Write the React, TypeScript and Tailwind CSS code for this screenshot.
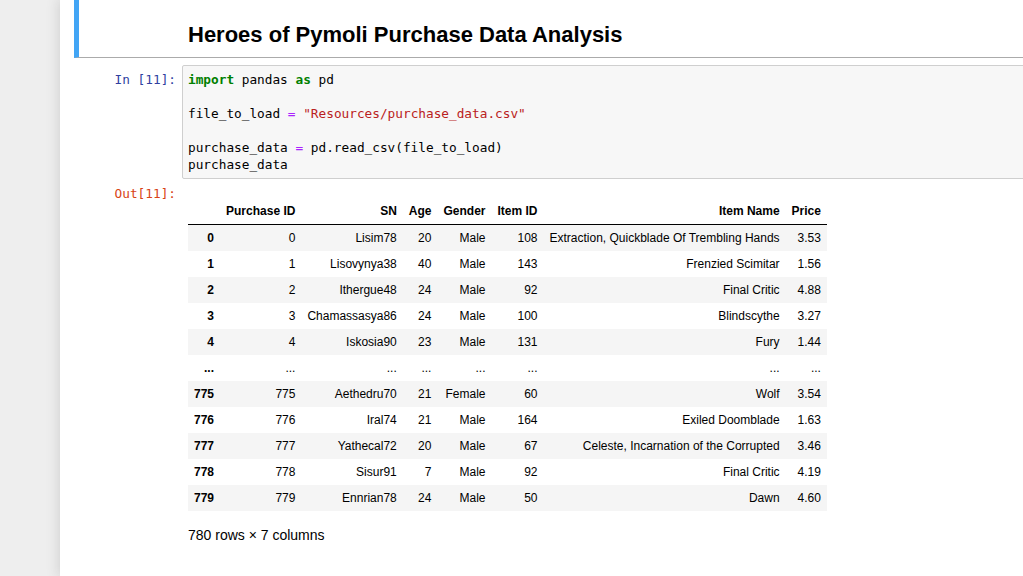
import React from 'react';

const mono = { fontFamily: '"DejaVu Sans Mono", monospace' };

const rows: (string | number)[][] = [
  ['0', '0', 'Lisim78', '20', 'Male', '108', 'Extraction, Quickblade Of Trembling Hands', '3.53'],
  ['1', '1', 'Lisovynya38', '40', 'Male', '143', 'Frenzied Scimitar', '1.56'],
  ['2', '2', 'Ithergue48', '24', 'Male', '92', 'Final Critic', '4.88'],
  ['3', '3', 'Chamassasya86', '24', 'Male', '100', 'Blindscythe', '3.27'],
  ['4', '4', 'Iskosia90', '23', 'Male', '131', 'Fury', '1.44'],
  ['...', '...', '...', '...', '...', '...', '...', '...'],
  ['775', '775', 'Aethedru70', '21', 'Female', '60', 'Wolf', '3.54'],
  ['776', '776', 'Iral74', '21', 'Male', '164', 'Exiled Doomblade', '1.63'],
  ['777', '777', 'Yathecal72', '20', 'Male', '67', 'Celeste, Incarnation of the Corrupted', '3.46'],
  ['778', '778', 'Sisur91', '7', 'Male', '92', 'Final Critic', '4.19'],
  ['779', '779', 'Ennrian78', '24', 'Male', '50', 'Dawn', '4.60'],
];

const headers = ['', 'Purchase ID', 'SN', 'Age', 'Gender', 'Item ID', 'Item Name', 'Price'];

const App = () => {
  return (
    <div className="w-full h-[576px] bg-[#eeeeee] overflow-hidden flex">
      <div className="w-[60px] shrink-0" />
      <div
        className="w-[1140px] shrink-0 h-full bg-white pl-[14px] shadow-[0_0_12px_1px_rgba(87,87,87,0.2)]"
        style={{ fontFamily: '"Liberation Sans", Arial, sans-serif' }}
      >
        {/* markdown cell (selected) */}
        <div className="h-[58px] border-l-[5px] border-b border-l-[#42A5F5] border-b-[#ababab] pl-[109px] pt-[22px]">
          <h2 className="text-[22px] leading-[26px] font-bold text-black">Heroes of Pymoli Purchase Data Analysis</h2>
        </div>

        {/* code cell */}
        <div className="flex mt-[7px]">
          <div className="w-[108px] shrink-0 text-right pr-[6px] pt-[6px] text-[12.75px] leading-[17px] text-[#303F9F]" style={mono}>
            In&nbsp;[11]:
          </div>
          <div
            className="flex-1 border border-[#cfcfcf] bg-[#f7f7f7] rounded-[2px] px-[5px] pt-[5px] pb-[5px] text-[12.75px] leading-[17px] text-black whitespace-pre"
            style={mono}
          >
            <div>
              <span className="text-[#008000] font-bold">import</span> pandas <span className="text-[#008000] font-bold">as</span> pd
            </div>
            <div>&nbsp;</div>
            <div>
              file_to_load <span className="text-[#AA22FF]">=</span> <span className="text-[#BA2121]">"Resources/purchase_data.csv"</span>
            </div>
            <div>&nbsp;</div>
            <div>
              purchase_data <span className="text-[#AA22FF]">=</span> pd.read_csv(file_to_load)
            </div>
            <div>purchase_data</div>
          </div>
        </div>

        {/* output */}
        <div className="flex mt-[6px]">
          <div className="w-[108px] shrink-0 text-right pr-[6px] text-[12.75px] leading-[17px] text-[#D84315]" style={mono}>
            Out[11]:
          </div>
          <div className="flex-1 pl-[6px] pt-[13px]">
            <table className="border-collapse text-[12px] leading-[14px] text-black">
              <thead className="border-b border-black">
                <tr>
                  {headers.map((h, i) => (
                    <th key={i} className="px-[6px] py-[6px] text-right font-bold">
                      {h}
                    </th>
                  ))}
                </tr>
              </thead>
              <tbody>
                {rows.map((r, i) => (
                  <tr key={i} className="odd:bg-[#f5f5f5]">
                    {r.map((c, j) =>
                      j === 0 ? (
                        <th key={j} className="px-[6px] py-[6px] text-right font-bold">
                          {c}
                        </th>
                      ) : (
                        <td key={j} className="px-[6px] py-[6px] text-right whitespace-nowrap">
                          {c}
                        </td>
                      )
                    )}
                  </tr>
                ))}
              </tbody>
            </table>
            <p className="mt-[16px] text-[14px] leading-[17px] text-black">780 rows × 7 columns</p>
          </div>
        </div>
      </div>
    </div>
  );
};

export default App;
